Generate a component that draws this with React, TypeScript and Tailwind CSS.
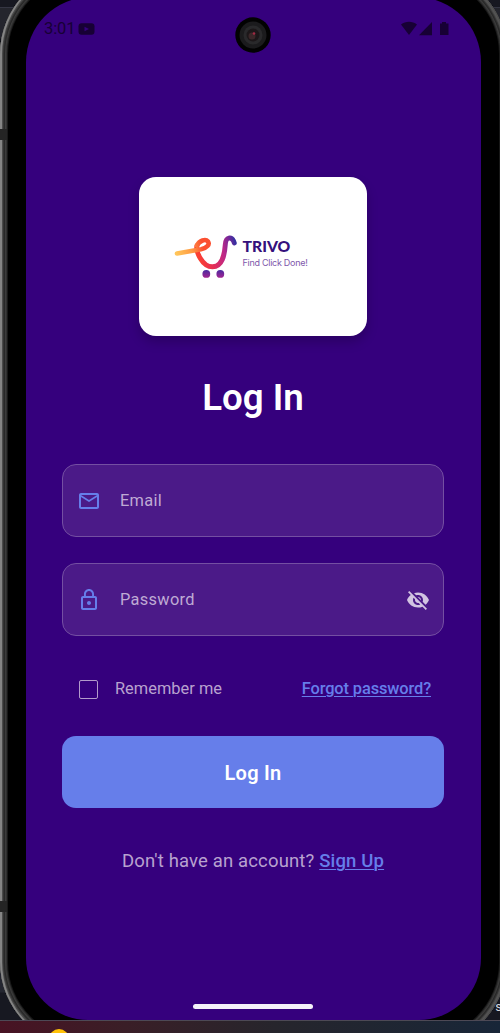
import React from "react";

function StatusBar() {
  return (
    <div className="flex h-[56px] items-center justify-between pl-[18px] pr-[31px] pt-[7px] text-[#170035]">
      <div className="flex items-center gap-[3px]">
        <span className="text-[16.500px] leading-5 tracking-[-0.1px]">3:01</span>
        <svg width="17" height="12" viewBox="0 0 17 12">
          <rect x="0.5" y="0.3" width="16" height="11.4" rx="3" fill="currentColor" />
          <path d="M6.5 3.8v4.4L11 6z" fill="#35007d" />
        </svg>
      </div>
      <svg width="49" height="15" viewBox="0 0 49 15" fill="currentColor">
        <path d="M0 3.500C4.500 -0.2 11.500 -0.2 16 3.500L8 14z" />
        <path d="M31 1v13.200H18z" />
        <path d="M39 2.500h2V1h4v1.500h2.500V14H39z" />
      </svg>
    </div>
  );
}

function Camera() {
  return (
    <svg className="absolute left-[208px] top-[19px]" width="38" height="38" viewBox="0 0 38 38">
      <circle cx="19" cy="19" r="17.700" fill="#020202" />
      <circle cx="19" cy="19" r="13.500" fill="#1b1b1d" />
      <circle cx="19" cy="19" r="9.500" fill="#29292b" />
      <circle cx="19" cy="19" r="6.500" fill="#1c1719" />
      <circle cx="18" cy="20" r="3.500" fill="#3b2729" />
      <circle cx="20" cy="17.500" r="1.300" fill="#a32a43" />
    </svg>
  );
}

function TrivoLogo() {
  return (
    <svg width="63" height="44" viewBox="0 0 63 44" fill="none">
      <defs>
        <linearGradient id="cart" gradientUnits="userSpaceOnUse" x1="23" y1="14" x2="61" y2="5">
          <stop stopColor="#fb4032" />
          <stop offset="0.3" stopColor="#e52e55" />
          <stop offset="0.65" stopColor="#bd2888" />
          <stop offset="0.85" stopColor="#762898" />
          <stop offset="1" stopColor="#3530a0" />
        </linearGradient>
        <linearGradient id="handle" gradientUnits="userSpaceOnUse" x1="2" y1="18" x2="33" y2="9">
          <stop stopColor="#ffc65a" />
          <stop offset="0.5" stopColor="#ff9a42" />
          <stop offset="0.85" stopColor="#fb5031" />
        </linearGradient>
        <linearGradient id="wheel" x1="0" y1="0" x2="0" y2="1">
          <stop stopColor="#4a2aa0" />
          <stop offset="1" stopColor="#a42591" />
        </linearGradient>
      </defs>
      <path
        d="M23 10.500C21.500 16 28 31.800 38.500 31.800C48.500 31.800 50.500 20 51.300 9.500C51.800 1 57.500 2 59.500 5.800L60.300 8"
        stroke="url(#cart)"
        strokeWidth="4.900"
        strokeLinecap="round"
        strokeLinejoin="round"
      />
      <path d="M3 18.500L27 14.300C33 13 36 9.500 34 6.500C31.500 3.500 25.500 5.500 23 10.500" stroke="url(#handle)" strokeWidth="4.600" strokeLinecap="round" />
      <circle cx="32.300" cy="38.900" r="3.900" fill="url(#wheel)" />
      <circle cx="46.300" cy="38.900" r="3.900" fill="url(#wheel)" />
    </svg>
  );
}

function MailIcon() {
  return (
    <svg className="ml-[14px]" width="24" height="24" viewBox="0 0 24 24" fill="#667eea">
      <path d="M22 6c0-1.100-.9-2-2-2H4c-1.100 0-2 .9-2 2v12c0 1.100.9 2 2 2h16c1.100 0 2-.9 2-2V6zm-2 0-8 5-8-5h16zm0 12H4V8l8 5 8-5v10z" />
    </svg>
  );
}

function LockIcon() {
  return (
    <svg className="ml-[14px]" width="24" height="24" viewBox="0 0 24 24" fill="#667eea">
      <path d="M12 17c1.100 0 2-.9 2-2s-.9-2-2-2-2 .9-2 2 .9 2 2 2zm6-9h-1V6c0-2.760-2.240-5-5-5S7 3.240 7 6v2H6c-1.100 0-2 .9-2 2v10c0 1.100.9 2 2 2h12c1.100 0 2-.9 2-2V10c0-1.100-.9-2-2-2zM8.900 6c0-1.710 1.390-3.100 3.100-3.100s3.100 1.390 3.100 3.100v2H8.900V6zM18 20H6V10h12v10z" />
    </svg>
  );
}

function EyeOffIcon() {
  return (
    <svg className="mr-[13px]" width="24" height="24" viewBox="0 0 24 24" fill="#d2c4e2">
      <path d="M12 7c2.760 0 5 2.240 5 5 0 .65-.13 1.260-.36 1.830l2.920 2.920c1.510-1.260 2.700-2.890 3.430-4.750-1.730-4.390-6-7.500-11-7.500-1.400 0-2.740.25-3.980.7l2.160 2.160C10.740 7.130 11.350 7 12 7zM2 4.270l2.280 2.280.46.46C3.080 8.300 1.780 10.020 1 12c1.730 4.390 6 7.500 11 7.500 1.550 0 3.030-.3 4.380-.84l.42.42L19.730 22 21 20.730 3.270 3 2 4.270zM7.530 9.800l1.550 1.550c-.05.21-.08.43-.08.65 0 1.660 1.340 3 3 3 .22 0 .44-.03.65-.08l1.550 1.550c-.67.33-1.410.53-2.200.53-2.760 0-5-2.240-5-5 0-.79.2-1.530.53-2.200zm4.310-.78 3.150 3.150.02-.16c0-1.660-1.340-3-3-3l-.17.01z" />
    </svg>
  );
}

function Field({ icon, label, trailing }: { icon: React.ReactNode; label: string; trailing?: React.ReactNode }) {
  return (
    <div className="flex h-[73px] items-center rounded-[14px] border border-[#744fa2] bg-[#4b1a88]">
      {icon}
      <span className="ml-[19px] flex-1 pt-[2px] text-[16.400px] tracking-[0.300px] text-[#bfaad4]">{label}</span>
      {trailing}
    </div>
  );
}

function Screen() {
  return (
    <div className="relative flex h-[1023px] w-[455px] flex-col overflow-hidden rounded-b-[62px] rounded-t-[65px] bg-[#35007d]">
      <StatusBar />
      <Camera />
      <div className="flex flex-1 flex-col pl-[36px] pr-[37px] pt-[124px]">
        <div className="mr-px flex h-[159px] w-[228px] self-center rounded-[17px] bg-white pl-[35px] pt-[58px] shadow-[0_6px_12px_rgba(0,0,0,0.2)]">
          <TrivoLogo />
          <div className="ml-[6px] pt-[2px]">
            <div className="font-[Lato] text-[15.700px] font-black leading-[18px] text-[#35107c]">TRIVO</div>
            <div className="whitespace-nowrap font-[Inter] text-[9px] leading-[15px] tracking-[-0.280px] text-[#8058ab]">Find Click Done!</div>
          </div>
        </div>
        <h1 className="mt-[39px] text-center text-[36.700px] font-semibold leading-[46px] text-white">Log In</h1>
        <div className="mt-[43px] flex flex-col gap-[26px]">
          <Field icon={<MailIcon />} label="Email" />
          <Field icon={<LockIcon />} label="Password" trailing={<EyeOffIcon />} />
        </div>
        <div className="mt-[41px] flex h-[24px] items-center pl-[17px] pr-[13px]">
          <span className="h-[19px] w-[19px] rounded-[2px] border-[1.500px] border-[#b39bcb]" />
          <span className="ml-[17px] flex-1 text-[16.400px] tracking-[0.020px] text-[#b8a2cf]">Remember me</span>
          <a className="text-[16.400px] font-medium tracking-[-0.120px] text-[#667eea] underline decoration-1 underline-offset-2">Forgot password?</a>
        </div>
        <button className="mt-[35px] h-[72px] rounded-[14px] bg-[#667eea] pt-px text-[20px] font-semibold tracking-[0.250px] text-white">
          Log In
        </button>
        <p className="mt-[41px] text-center text-[18.500px] leading-[24px] tracking-[0.150px] text-[#b8a2cf]">
          Don't have an account? <a className="font-medium text-[#667eea] underline decoration-1 underline-offset-2">Sign Up</a>
        </p>
      </div>
      <div className="mb-[11px] mr-[2px] h-[5px] w-[120px] self-center rounded-full bg-[#f5f1fa]" />
    </div>
  );
}

export default function App() {
  return (
    <main className="h-[1033px] w-[500px] overflow-hidden bg-[#171821] font-[Roboto,sans-serif]">
      <div className="relative h-[1020px] overflow-hidden bg-[linear-gradient(180deg,#171821_0px,#171821_7px,#353643_7px,#353643_8px,#24252d_8px,#24252d_38px,#111218_39px,#111218_970px,#242630_971px,#242630_992px,#171821_993px)]">
        <div className="-mt-[31px] h-[1078px] w-[507px] rounded-[85px] bg-black p-[8px] shadow-[inset_2px_0_0_0_#858585,inset_0_0_0_1px_#4c4c4c,inset_0_0_0_2px_#555,inset_0_0_0_3px_#4c4c4c,inset_0_0_0_4px_#343434,inset_0_0_0_5px_#282828,inset_0_0_0_6px_#3c3c3c,inset_0_0_0_7px_#303030,inset_0_0_0_8px_#181818]">
          <div className="h-full w-full pl-[18px] pt-[20px]">
            <Screen />
          </div>
        </div>
        <div className="absolute left-0 top-[129px] h-[11px] w-[7px] bg-[#242424]" />
        <div className="absolute left-0 top-[901px] h-[11px] w-[7px] bg-[#242424]" />
        <span className="absolute -right-[2px] bottom-[5px] font-[Roboto] text-[13px] leading-4 text-[#d6d8dc]">s</span>
      </div>
      <div className="flex h-[13px] overflow-hidden border-t border-[#4d4955] bg-[linear-gradient(90deg,#481323,#3a1e27_25%,#26252c_55%,#182638_100%)] pl-[49px] pt-[8px]">
        <div className="h-[20px] w-[20px] shrink-0 rounded-full bg-[#ffc107]" />
      </div>
    </main>
  );
}
